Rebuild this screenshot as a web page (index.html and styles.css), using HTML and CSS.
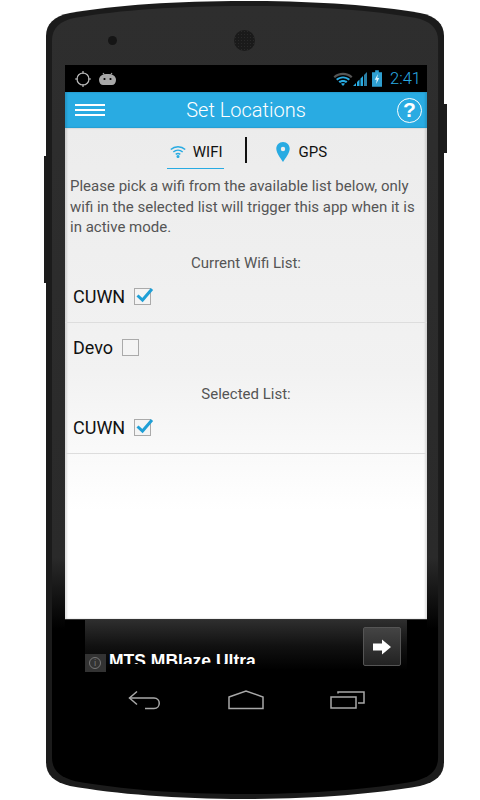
FILE: index.html
```html
<!DOCTYPE html>
<html lang="en">
<head>
  <meta charset="UTF-8">
  <meta name="viewport" content="width=device-width, initial-scale=1.0">
  <title>Set Locations</title>
  <link rel="stylesheet" href="styles.css">
</head>
<body>

  <div class="phone">
    <svg class="phone-shape" width="398" height="800" viewBox="0 0 398 800">
      <defs>
        <linearGradient id="bodyFill" x1="0" y1="0" x2="0" y2="1">
          <stop offset="0" stop-color="#2e2e2e"/>
          <stop offset="0.7" stop-color="#2a2a2a"/>
          <stop offset="0.79" stop-color="#000"/>
          <stop offset="1" stop-color="#000"/>
        </linearGradient>
      </defs>
      <path fill="#1b1b1b" d="M0 36C0 24 8 16 24 13 70 5 130 1 199 1S328 5 374 13C390 16 398 24 398 36V762C398 775 390 782 374 786 328 794 268 799 199 799S70 794 24 786C8 782 0 775 0 762z"/>
      <path fill="url(#bodyFill)" transform="translate(6 5) scale(0.97 0.9875)" d="M0 36C0 24 8 16 24 13 70 5 130 1 199 1S328 5 374 13C390 16 398 24 398 36V762C398 775 390 782 374 786 328 794 268 799 199 799S70 794 24 786C8 782 0 775 0 762z"/>
    </svg>
    <span class="side-btn side-left"></span>
    <span class="side-btn side-right"></span>

    <div class="bezel-top">
      <span class="sensor"></span>
      <span class="speaker"></span>
    </div>

    <div class="screen">
      <div class="status-bar">
        <div class="status-icons">
          <svg width="20" height="20" viewBox="0 0 20 20" fill="none" stroke="#bbb">
            <circle cx="10" cy="10" r="6" stroke-width="1.2"/>
            <path d="M10 2v3M10 15v3M2 10h3M15 10h3" stroke-width="1.2"/>
          </svg>
          <svg width="19" height="16" viewBox="0 0 19 16" fill="#a8a8a8">
            <path d="M5 2 L6.500 4 M14 2 L12.500 4" stroke="#a8a8a8" stroke-width="1.2"/>
            <path d="M1 9c0-4 3.500-6 8.500-6s8.500 2 8.500 6c0 3-2 5-4 5H5c-2 0-4-2-4-5z"/>
            <circle cx="6.500" cy="8" r="1.100" fill="#000"/>
            <circle cx="12.500" cy="8" r="1.100" fill="#000"/>
          </svg>
        </div>
        <div class="status-icons">
          <svg width="20" height="16" viewBox="0 0 20 16">
            <path d="M0.500 5.500C5.500 0.500 14.500 0.500 19.500 5.500L18 7C13.500 3 6.500 3 2 7z" fill="#555"/>
            <path d="M3 8C7 4.500 13 4.500 17 8L15.500 9.500C12 6.500 8 6.500 4.500 9.500z" fill="#29abe2"/>
            <path d="M5.500 10.500C8 8.500 12 8.500 14.500 10.500L13 12C11 10.800 9 10.800 7 12z" fill="#29abe2"/>
            <path d="M8 12.800C9 12.200 11 12.200 12 12.800L10 15z" fill="#29abe2"/>
          </svg>
          <svg class="signal" width="14" height="15" viewBox="0 0 14 15" fill="#29abe2">
            <path d="M0 15L3 12V15z M4 15V11L6.500 8.500V15z M7.500 15V7.500L10 5V15z"/>
            <path d="M11 15V4L14 1V15z" fill="#2a7fa6"/>
          </svg>
          <svg class="battery" width="10" height="17" viewBox="0 0 11 18">
            <path d="M3.500 0h4v2h3.500v16H0V2h3.500z" fill="#2f9fd0"/>
            <path d="M6.500 4L3 10.500h2.200L4.500 15 8 8.500H5.800z" fill="#dff3fb"/>
          </svg>
          <span class="clock">2:41</span>
        </div>
      </div>

      <div class="app-bar">
        <div class="menu-icon"><span></span><span></span><span></span></div>
        <div class="app-title">Set Locations</div>
        <div class="help-icon">?</div>
      </div>

      <div class="content">
        <div class="tabs">
          <div class="tab tab-active">
            <svg width="16" height="13" viewBox="0 0 16 13" fill="none" stroke="#29abe2" stroke-width="1.500">
              <path d="M0.800 4.500C4.800 0.800 11.200 0.800 15.200 4.500"/>
              <path d="M3.300 7C6 4.700 10 4.700 12.700 7"/>
              <path d="M5.700 9.300C7 8.300 9 8.300 10.300 9.300"/>
              <circle cx="8" cy="11.500" r="0.800" fill="#29abe2"/>
            </svg>
            <span>WIFI</span>
          </div>
          <span class="tab-divider"></span>
          <div class="tab tab-gps">
            <svg width="14" height="20" viewBox="0 0 14 20">
              <path fill-rule="evenodd" d="M7 0C3 0 0.300 3 0.300 6.800 0.300 11 4.500 16 7 20c2.500-4 6.700-9 6.700-13.200C13.700 3 11 0 7 0zM7 4.800a2.200 2.200 0 1 1 0 4.400 2.200 2.200 0 0 1 0-4.400z" fill="#29abe2"/>
            </svg>
            <span>GPS</span>
          </div>
        </div>

        <p class="intro">Please pick a wifi from the available list below, only wifi in the selected list will trigger this app when it is in active mode.</p>

        <div class="list-title">Current Wifi List:</div>
        <div class="wifi-row wifi-row-line">
          <span class="wifi-name">CUWN</span>
          <span class="check">
            <svg class="tick" width="18" height="16" viewBox="0 0 18 16"><path d="M1.500 8.500L6.500 13 16 2" fill="none" stroke="#1f9fd6" stroke-width="3"/></svg>
          </span>
        </div>
        <div class="wifi-row">
          <span class="wifi-name">Devo</span>
          <span class="check"></span>
        </div>

        <div class="list-title list-title-second">Selected List:</div>
        <div class="wifi-row wifi-row-line">
          <span class="wifi-name">CUWN</span>
          <span class="check">
            <svg class="tick" width="18" height="16" viewBox="0 0 18 16"><path d="M1.500 8.500L6.500 13 16 2" fill="none" stroke="#1f9fd6" stroke-width="3"/></svg>
          </span>
        </div>
      </div>

      <div class="ad-bar">
        <div class="ad">
          <span class="ad-info"><span class="ad-info-dot">i</span></span>
          <span class="ad-text">MTS MBlaze Ultra</span>
          <span class="ad-button">
            <svg width="20" height="16" viewBox="0 0 20 16"><path d="M1 4.500h9V0.500L19 8l-9 7.500v-4H1z" fill="#fff"/></svg>
          </span>
        </div>
      </div>

      <div class="nav-bar">
        <svg width="35" height="20" viewBox="0 0 35 20" fill="none" stroke="#a8a8a8" stroke-width="1.500">
          <path d="M9 1.500L1.500 8 9 14.500"/>
          <path d="M1.500 8H26c7 0 7 10.500 0 10.500H17"/>
        </svg>
        <svg class="nav-home" width="36" height="20" viewBox="0 0 36 20" fill="none" stroke="#a8a8a8" stroke-width="1.500">
          <path d="M1 7L18 1 35 7V18.500H1z"/>
        </svg>
        <svg width="35" height="20" viewBox="0 0 35 20" fill="none" stroke="#a8a8a8" stroke-width="1.500">
          <rect x="1" y="7" width="25" height="11"/>
          <path d="M8 3.500V2H34V13H28"/>
        </svg>
      </div>
    </div>
  </div>

</body>
</html>
```

FILE: styles.css
```css
body {
  font-family: 'Roboto', 'Liberation Sans', sans-serif;
  background-color: #fff;
  margin: 0;
  padding: 0;
  height: 800px;
  overflow: hidden;
}

/* Phone body */
.phone {
  position: relative;
  box-sizing: border-box;
  width: 398px;
  height: 800px;
  margin-left: 46px;
  padding: 0 17px 0 19px;
}

.phone-shape {
  position: absolute;
  left: 0;
  top: 0;
}

.side-btn {
  position: absolute;
  background-color: #1c1c1c;
}

.side-left {
  left: -2px;
  top: 156px;
  width: 2px;
  height: 127px;
}

.side-right {
  right: -3px;
  top: 104px;
  width: 3px;
  height: 49px;
}

.bezel-top {
  height: 65px;
}

.sensor {
  position: absolute;
  left: 62px;
  top: 36px;
  width: 9px;
  height: 9px;
  border-radius: 50%;
  background-color: #151515;
}

.speaker {
  position: absolute;
  left: 188px;
  top: 30px;
  width: 21px;
  height: 21px;
  border-radius: 50%;
  background-color: #1a1a1a;
  background-image: radial-gradient(#292929 0.5px, transparent 1px);
  background-size: 3px 3px;
}

.screen {
  position: relative;
  width: 362px;
}

/* Status bar */
.status-bar {
  display: flex;
  justify-content: space-between;
  align-items: center;
  height: 27px;
  padding: 0 6px 0 8px;
  background-color: #000;
}

.status-icons {
  display: flex;
  align-items: center;
  gap: 5px;
}

.signal {
  margin-left: -5px;
}

.clock {
  color: #29abe2;
  font-size: 16.5px;
  font-weight: 300;
  margin-left: 3px;
}

/* App bar */
.app-bar {
  display: flex;
  justify-content: space-between;
  align-items: center;
  height: 36px;
  padding: 0 5px 0 10px;
  background-color: #29abe2;
  color: #fff;
  box-shadow: inset 2px 0 2px rgba(0, 0, 0, 0.12), inset -2px 0 2px rgba(0, 0, 0, 0.12);
}

.menu-icon {
  display: flex;
  flex-direction: column;
  gap: 3px;
  width: 30px;
}

.menu-icon span {
  height: 2px;
  background-color: #fff;
}

.app-title {
  font-size: 20px;
  font-weight: 300;
  margin-right: 10px;
}

.help-icon {
  box-sizing: border-box;
  width: 25px;
  height: 25px;
  border: 1.5px solid #fff;
  border-radius: 50%;
  font-family: 'Liberation Sans', sans-serif;
  font-size: 21px;
  font-weight: bold;
  line-height: 22px;
  text-align: center;
}

/* Main content */
.content {
  height: 492px;
  background: linear-gradient(to bottom, #ececec 0, #f2f2f2 50%, #fff 78%, #fff 100%);
  border-bottom: 1px solid #333;
  box-sizing: border-box;
  box-shadow: inset 2px 0 2px rgba(0, 0, 0, 0.12), inset -2px 0 2px rgba(0, 0, 0, 0.12);
}

.tabs {
  display: flex;
  justify-content: center;
  align-items: center;
  height: 40px;
  padding-left: 2px;
  font-size: 15px;
  color: #111;
}

.tab {
  display: flex;
  align-items: center;
  gap: 7px;
  height: 32px;
  margin-top: 8px;
  padding: 0 1px 0 3px;
}

.tab-active {
  border-bottom: 1px solid #29abe2;
}

.tab-gps {
  gap: 9px;
  padding: 0;
}

.tab-divider {
  width: 2px;
  height: 26px;
  margin: 4px 29px 0 21px;
  background-color: #111;
}

.intro {
  margin: 8px 5px 0;
  font-size: 15px;
  line-height: 20.5px;
  color: #555;
}

.list-title {
  margin: 17px 0 1px;
  font-size: 15px;
  line-height: 17px;
  text-align: center;
  color: #555;
}

.list-title-second {
  margin-top: 13px;
}

.wifi-row {
  display: flex;
  align-items: center;
  gap: 8.5px;
  box-sizing: border-box;
  height: 50px;
  padding-left: 8px;
}

.wifi-row-line {
  padding-bottom: 2px;
  border-bottom: 1px solid #ddd;
}

.wifi-name {
  font-size: 18px;
  color: #111;
}

.check {
  position: relative;
  box-sizing: border-box;
  width: 17px;
  height: 17px;
  border: 1.5px solid #aaa;
  background-color: #f4f4f4;
}

.tick {
  position: absolute;
  left: 1px;
  top: -2px;
}

/* Ad strip */
.ad-bar {
  height: 52px;
  background-color: #000;
}

.ad {
  position: relative;
  width: 322px;
  height: 52px;
  margin-left: 20px;
  overflow: hidden;
  background: linear-gradient(to bottom, #2e2e2e 0, #111 50%, #000 96%);
}

.ad-info {
  position: absolute;
  left: 0;
  top: 34px;
  width: 21px;
  height: 18px;
  background-color: #333;
}

.ad-info-dot {
  display: block;
  box-sizing: border-box;
  width: 12px;
  height: 12px;
  margin: 3px 0 0 4px;
  border: 1px solid #777;
  border-radius: 50%;
  color: #777;
  font-size: 9px;
  line-height: 10px;
  text-align: center;
}

.ad-text {
  position: absolute;
  left: 24px;
  top: 31px;
  height: 13px;
  overflow: hidden;
  color: #fff;
  font-family: 'Liberation Sans', sans-serif;
  font-size: 17.5px;
  font-weight: bold;
  line-height: 20px;
}

.ad-button {
  position: absolute;
  right: 6px;
  top: 7px;
  display: flex;
  justify-content: center;
  align-items: center;
  box-sizing: border-box;
  width: 38px;
  height: 39px;
  border: 1px solid #555;
  border-radius: 2px;
  background: linear-gradient(to bottom, #444, #222);
}

/* Nav bar */
.nav-bar {
  display: flex;
  justify-content: space-between;
  align-items: flex-start;
  height: 50px;
  padding: 18px 62px 0 63px;
  background-color: #000;
}

.nav-home {
  margin-left: -2px;
}
```
